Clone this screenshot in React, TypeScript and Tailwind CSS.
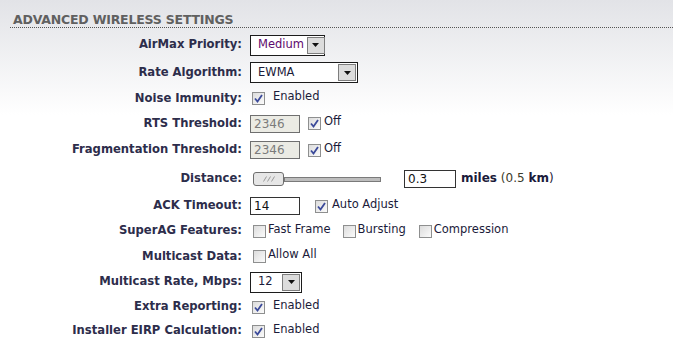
import React from 'react';

const font = "font-['Verdana','DejaVu_Sans',sans-serif]";

const Check = ({ on = false }: { on?: boolean }) => (
  <span className="inline-flex h-[13px] w-[13px] shrink-0 items-center justify-center border border-[#8e8f8f] bg-[linear-gradient(135deg,#dcdcdc,#fbfbfb)]">
    {on && (
      <svg width="9" height="9" viewBox="0 0 9 9">
        <path d="M1 4.5 L3.5 7.5 L8 1" fill="none" stroke="#3b4a9a" strokeWidth="1.8" />
      </svg>
    )}
  </span>
);

const Select = ({ value, width, text = 'text-[#1b1b3a]' }: { value: string; width: string; text?: string }) => (
  <div className={`flex h-[21px] items-center justify-between gap-[3px] border border-[#1c1c1c] bg-white pl-[7px] pr-[1px] ${width}`}>
    <span className={`whitespace-nowrap text-[11.5px] ${text}`}>{value}</span>
    <span className="flex h-[17px] w-[18px] shrink-0 items-center justify-center border border-[#7d7d7d] bg-[#dcdcdc]">
      <svg width="7" height="4" viewBox="0 0 7 4">
        <path d="M0 0 H7 L3.5 4 Z" fill="#111" />
      </svg>
    </span>
  </div>
);

const TextBox = ({ value, disabled = false, width = 'w-[50px]' }: { value: string; disabled?: boolean; width?: string }) => (
  <div
    className={`flex h-[18px] items-center border pl-[3px] text-[12px] ${width} ${
      disabled ? 'border-[#6f6f6f] bg-[#ebebe4] text-[#7b7b7b]' : 'border-[#333] bg-white text-[#111]'
    }`}
  >
    {value}
  </div>
);

const Opt = ({ on, label, gap = 'gap-[2px]' }: { on?: boolean; label: string; gap?: string }) => (
  <label className={`flex items-center ${gap} text-[11.5px] text-[#1b1b3a]`}>
    <Check on={on} />
    <span className="-mt-[3px]">{label}</span>
  </label>
);

const rows: { label: string; h: string; body: React.ReactNode }[] = [
  { label: 'AirMax Priority:', h: 'h-[28px]', body: <Select value="Medium" width="w-[75px]" text="text-[#5e0a6e]" /> },
  { label: 'Rate Algorithm:', h: 'h-[27px]', body: <Select value="EWMA" width="w-[108px]" /> },
  { label: 'Noise Immunity:', h: 'h-[25px]', body: <div className="pl-[2px]"><Opt on label="Enabled" gap="gap-[8px]" /></div> },
  {
    label: 'RTS Threshold:',
    h: 'h-[25px]',
    body: (
      <div className="flex items-center gap-[8px]">
        <TextBox value="2346" disabled />
        <Opt on label="Off" gap="gap-[3px]" />
      </div>
    ),
  },
  {
    label: 'Fragmentation Threshold:',
    h: 'h-[28px]',
    body: (
      <div className="flex items-center gap-[8px]">
        <TextBox value="2346" disabled />
        <Opt on label="Off" gap="gap-[3px]" />
      </div>
    ),
  },
  {
    label: 'Distance:',
    h: 'h-[30px]',
    body: (
      <div className="flex items-center">
        <div className="flex items-center pl-[3px]">
          <span className="flex h-[14px] w-[31px] items-center justify-center rounded-[3px] border border-[#6e6e6e] bg-[#e6e6e6]">
            <svg width="12" height="6" viewBox="0 0 12 6">
              <path d="M0.5 5.5 L3.5 0.5 M4.5 5.5 L7.5 0.5 M8.5 5.5 L11.5 0.5" stroke="#9a9a9a" strokeWidth="1" />
            </svg>
          </span>
          <span className="h-[5px] w-[97px] border border-[#7a7a7a] bg-[#bdbdbd]" />
        </div>
        <div className="ml-[23px]">
          <TextBox value="0.3" width="w-[52px]" />
        </div>
        <span className="ml-[5px] -mt-[3px] text-[12px] text-[#1b1b3a]">
          <b>miles</b> <span className="text-[#3b3b2a]">(0.5</span> <b>km</b>)
        </span>
      </div>
    ),
  },
  {
    label: 'ACK Timeout:',
    h: 'h-[24px]',
    body: (
      <div className="flex items-center gap-[15px]">
        <TextBox value="14" />
        <Opt on label="Auto Adjust" gap="gap-[4px]" />
      </div>
    ),
  },
  {
    label: 'SuperAG Features:',
    h: 'h-[26px]',
    body: (
      <div className="flex items-center pl-[3px]">
        <Opt label="Fast Frame" />
        <div className="ml-[12px]"><Opt label="Bursting" /></div>
        <div className="ml-[13px]"><Opt label="Compression" /></div>
      </div>
    ),
  },
  { label: 'Multicast Data:', h: 'h-[25px]', body: <div className="pl-[3px]"><Opt label="Allow All" /></div> },
  { label: 'Multicast Rate, Mbps:', h: 'h-[26px]', body: <Select value="12" width="w-[52px]" /> },
  { label: 'Extra Reporting:', h: 'h-[24px]', body: <div className="pl-[2px]"><Opt on label="Enabled" gap="gap-[8px]" /></div> },
  { label: 'Installer EIRP Calculation:', h: 'h-[24px]', body: <div className="pl-[2px]"><Opt on label="Enabled" gap="gap-[8px]" /></div> },
];

export default function App() {
  return (
    <div className={`h-[355px] w-full overflow-hidden bg-[linear-gradient(to_bottom,#e2e3e7_0px,#ffffff_115px)] ${font}`}>
      <div className="ml-[10px] border-b border-dotted border-[#555] pl-[3px] pt-[13px]">
        <h2 className="text-[12.5px] font-bold leading-[14px] tracking-[-0.2px] text-[#606060]">ADVANCED WIRELESS SETTINGS</h2>
      </div>
      <div className="pt-[3px]">
        {rows.map((r) => (
          <div key={r.label} className={`flex items-center ${r.h}`}>
            <div className="w-[243px] shrink-0 pr-[1px] text-right text-[11.6px] font-bold text-[#2d2d4b]">{r.label}</div>
            <div className="pl-[7px]">{r.body}</div>
          </div>
        ))}
      </div>
    </div>
  );
}
